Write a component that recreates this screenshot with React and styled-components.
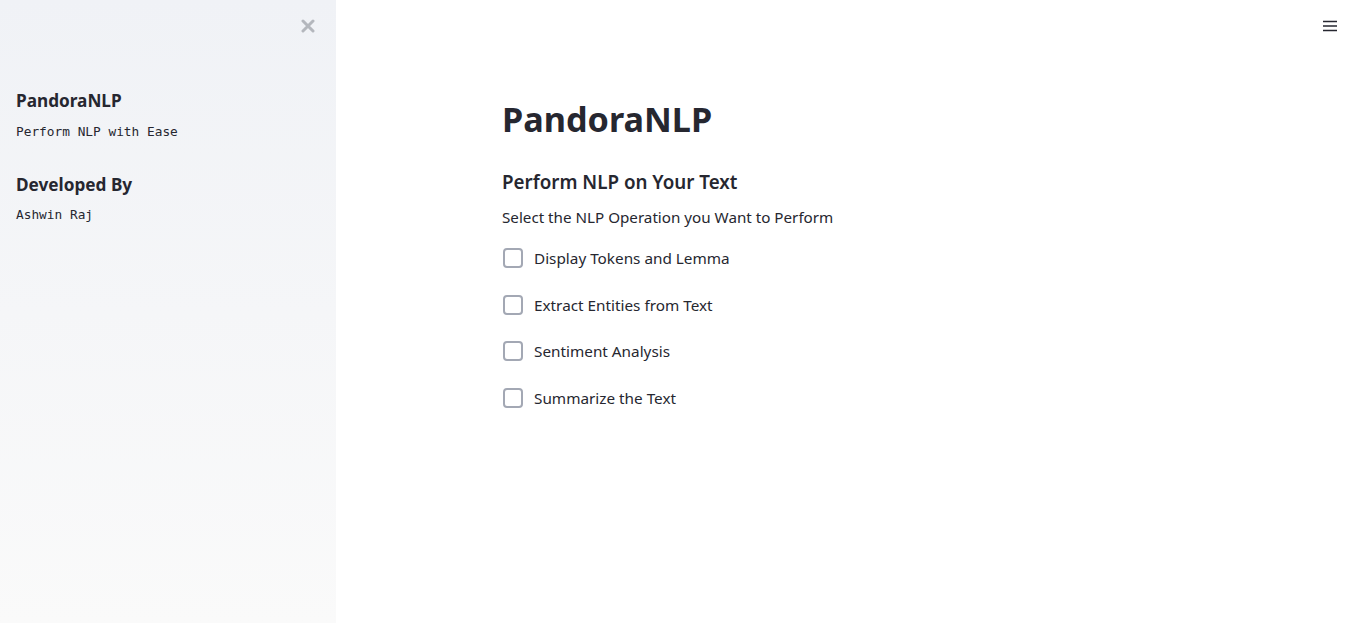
import styled, { createGlobalStyle } from "styled-components";

const GlobalStyle = createGlobalStyle`
  * { box-sizing: border-box; }
  body {
    margin: 0;
    font-family: "Noto Sans", "Open Sans", sans-serif;
    color: #262730;
    background: #fff;
  }
`;

const options = [
  "Display Tokens and Lemma",
  "Extract Entities from Text",
  "Sentiment Analysis",
  "Summarize the Text",
];

const App = () => {
  return (
    <Page>
      <GlobalStyle />
      <Sidebar>
        <CloseButton aria-label="close sidebar">
          <svg width="14" height="14" viewBox="0 0 14 14">
            <path d="M2 2 L12 12 M12 2 L2 12" stroke="#b4b7bd" strokeWidth="3" strokeLinecap="round" />
          </svg>
        </CloseButton>
        <SideBlock>
          <SideTitle>PandoraNLP</SideTitle>
          <Mono>Perform NLP with Ease</Mono>
        </SideBlock>
        <SideBlock>
          <SideTitle>Developed By</SideTitle>
          <Mono>Ashwin Raj</Mono>
        </SideBlock>
      </Sidebar>
      <Main>
        <MenuButton aria-label="menu">
          <svg width="14" height="12" viewBox="0 0 14 12">
            <path d="M0 1.5 H14 M0 6 H14 M0 10.5 H14" stroke="#262730" strokeWidth="1.6" />
          </svg>
        </MenuButton>
        <Content>
          <Title>PandoraNLP</Title>
          <Subheader>Perform NLP on Your Text</Subheader>
          <Text>Select the NLP Operation you Want to Perform</Text>
          <Options>
            {options.map((label) => (
              <CheckRow key={label}>
                <Box />
                <span>{label}</span>
              </CheckRow>
            ))}
          </Options>
        </Content>
      </Main>
    </Page>
  );
};
export default App;

const Page = styled.div`
  display: flex;
  height: 623px;
  overflow: hidden;
`;

const Sidebar = styled.aside`
  position: relative;
  width: 336px;
  flex-shrink: 0;
  height: 100%;
  background: linear-gradient(180deg, #f0f2f6 0%, #fafafa 100%);
  padding: 91px 16px 0;
  display: flex;
  flex-direction: column;
  gap: 36px;
`;

const CloseButton = styled.button`
  position: absolute;
  top: 19px;
  left: 301px;
  border: none;
  background: none;
  padding: 0;
  display: flex;
`;

const SideBlock = styled.div`
  display: flex;
  flex-direction: column;
  gap: 12px;
`;

const SideTitle = styled.h3`
  margin: 0;
  font-size: 17.2px;
  font-weight: 700;
  line-height: 1.2;
  color: #262730;
`;

const Mono = styled.p`
  margin: 0;
  font-family: "DejaVu Sans Mono", "Liberation Mono", monospace;
  font-size: 12.8px;
  color: #262730;
`;

const Main = styled.main`
  position: relative;
  flex: 1;
  display: flex;
  justify-content: center;
`;

const MenuButton = styled.button`
  position: absolute;
  top: 20px;
  right: 21px;
  border: none;
  background: none;
  padding: 0;
  display: flex;
`;

const Content = styled.div`
  width: 690px;
  padding-top: 98px;
`;

const Title = styled.h1`
  margin: 0;
  font-size: 34.2px;
  font-weight: 700;
  line-height: 42px;
  color: #262730;
`;

const Subheader = styled.h2`
  margin: 30px 0 0;
  font-size: 18.8px;
  font-weight: 600;
  line-height: 24px;
  color: #262730;
`;

const Text = styled.p`
  margin: 11px 0 0;
  font-size: 15.2px;
  line-height: 24px;
`;

const Options = styled.div`
  margin-top: 17px;
  display: flex;
  flex-direction: column;
  gap: 22.5px;
`;

const CheckRow = styled.label`
  display: flex;
  align-items: center;
  gap: 11px;
  font-size: 15.3px;
  line-height: 24px;
  padding-left: 1px;
`;

const Box = styled.span`
  width: 20px;
  height: 20px;
  border: 2px solid #a3a8b4;
  border-radius: 4px;
  background: #fff;
  flex-shrink: 0;
`;
